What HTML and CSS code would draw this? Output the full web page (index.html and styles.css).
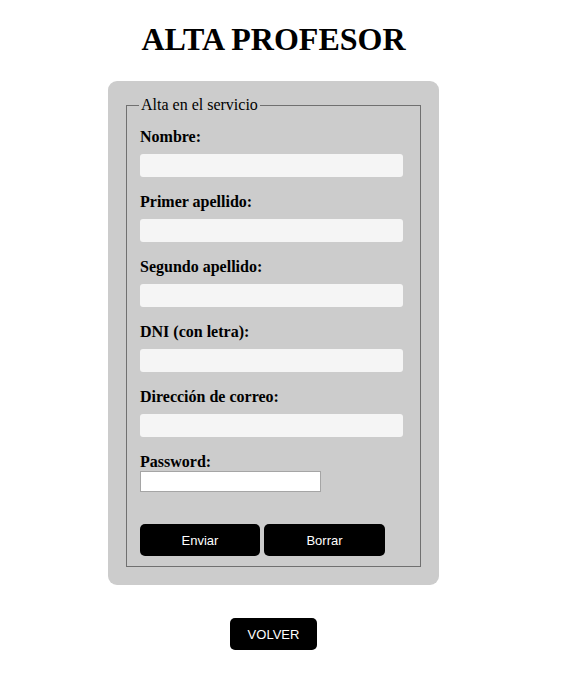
FILE: index.html
```html
<!DOCTYPE html>
<html lang="es">
<head>
<meta charset="utf-8">
<title>Alta profesor</title>
<link rel="stylesheet" href="styles.css">
</head>
<body>
<div class="page">
  <h1 class="title">ALTA PROFESOR</h1>
  <form class="card">
    <fieldset class="group">
      <legend class="legend">Alta en el servicio</legend>
      <label class="label" for="nombre">Nombre:</label>
      <input class="field" id="nombre" type="text">
      <label class="label" for="ap1">Primer apellido:</label>
      <input class="field" id="ap1" type="text">
      <label class="label" for="ap2">Segundo apellido:</label>
      <input class="field" id="ap2" type="text">
      <label class="label" for="dni">DNI (con letra):</label>
      <input class="field" id="dni" type="text">
      <label class="label" for="mail">Dirección de correo:</label>
      <input class="field" id="mail" type="text">
      <label class="label" for="pw">Password:</label>
      <input class="pass" id="pw" type="password">
      <div class="actions">
        <button class="btn btn-send" type="button">Enviar</button>
        <button class="btn btn-reset" type="button">Borrar</button>
      </div>
    </fieldset>
  </form>
  <button class="btn btn-back" type="button">VOLVER</button>
</div>
</body>
</html>
```
FILE: styles.css
```css
html, body {
  margin: 0;
  padding: 0;
  background: #fff;
}
.page {
  width: 531px;
  margin: 0 8px;
  display: flex;
  flex-direction: column;
  align-items: center;
  font-family: "Liberation Serif", "Times New Roman", serif;
  color: #000;
}
.title {
  margin: 21px 0 23px;
  font-size: 32px;
  line-height: 37px;
  font-weight: bold;
}
.card {
  box-sizing: border-box;
  width: 331px;
  padding: 15px 16px 18px;
  background: #cccccc;
  border-radius: 9px;
  margin: 0;
}
.group {
  margin: 0 2px;
  padding: 6px 12px 10px 13px;
  border: 1px solid #707070;
  display: flex;
  flex-direction: column;
  align-items: flex-start;
}
.legend {
  padding: 0 2px;
  margin-left: -1px;
  font-size: 16px;
  line-height: 18px;
}
.label {
  display: block;
  margin-top: 8px;
  font-size: 16px;
  line-height: 18px;
  font-weight: bold;
}
.field {
  box-sizing: border-box;
  width: 263px;
  height: 23px;
  margin: 8px 0 8px;
  padding: 0 4px;
  border: none;
  border-radius: 3px;
  background: #f5f5f5;
  font-family: "Liberation Sans", Arial, sans-serif;
  font-size: 13px;
}
.pass {
  box-sizing: border-box;
  width: 181px;
  height: 21px;
  margin: 0;
  padding: 1px 2px;
  border: 1px solid #a5a5a5;
  background: #fff;
}
.actions {
  display: flex;
  gap: 4px;
  margin-top: 32px;
}
.btn {
  height: 32px;
  border: none;
  border-radius: 5px;
  background: #000;
  color: #fff;
  font-family: "Liberation Sans", Arial, sans-serif;
  font-size: 13px;
  padding: 0;
  cursor: pointer;
}
.btn-send {
  width: 120px;
}
.btn-reset {
  width: 121px;
}
.btn-back {
  width: 87px;
  margin-top: 33px;
}
```
